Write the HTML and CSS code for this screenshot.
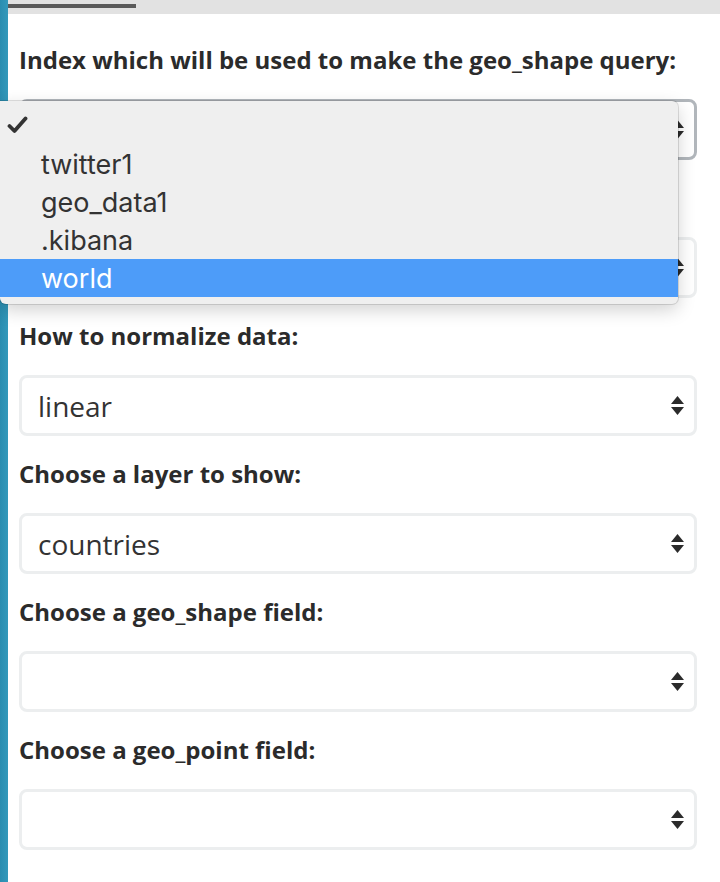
FILE: index.html
```html
<!DOCTYPE html>
<html>
<head>
<meta charset="utf-8">
<link rel="stylesheet" href="styles.css">
</head>
<body>
<div class="app">
  <div class="rail"></div>
  <div class="main">
    <div class="tabbar"><div class="tab-indicator"></div></div>
    <form class="form">
      <div class="field">
        <div class="label">Index which will be used to make the geo_shape query:</div>
        <div class="select focused">
          <span class="value"></span>
          <svg class="arrows" width="13" height="20" viewBox="0 0 13 20"><path d="M6.5 0 L13 8 H0 Z M0 11 H13 L6.5 19 Z" fill="#2b2b2b"/></svg>
        </div>
      </div>
      <div class="field">
        <div class="label covered"></div>
        <div class="select">
          <span class="value"></span>
          <svg class="arrows" width="13" height="20" viewBox="0 0 13 20"><path d="M6.5 0 L13 8 H0 Z M0 11 H13 L6.5 19 Z" fill="#2b2b2b"/></svg>
        </div>
      </div>
      <div class="field">
        <div class="label">How to normalize data:</div>
        <div class="select">
          <span class="value">linear</span>
          <svg class="arrows" width="13" height="20" viewBox="0 0 13 20"><path d="M6.5 0 L13 8 H0 Z M0 11 H13 L6.5 19 Z" fill="#2b2b2b"/></svg>
        </div>
      </div>
      <div class="field">
        <div class="label">Choose a layer to show:</div>
        <div class="select">
          <span class="value">countries</span>
          <svg class="arrows" width="13" height="20" viewBox="0 0 13 20"><path d="M6.5 0 L13 8 H0 Z M0 11 H13 L6.5 19 Z" fill="#2b2b2b"/></svg>
        </div>
      </div>
      <div class="field">
        <div class="label">Choose a geo_shape field:</div>
        <div class="select">
          <span class="value"></span>
          <svg class="arrows" width="13" height="20" viewBox="0 0 13 20"><path d="M6.5 0 L13 8 H0 Z M0 11 H13 L6.5 19 Z" fill="#2b2b2b"/></svg>
        </div>
      </div>
      <div class="field">
        <div class="label">Choose a geo_point field:</div>
        <div class="select">
          <span class="value"></span>
          <svg class="arrows" width="13" height="20" viewBox="0 0 13 20"><path d="M6.5 0 L13 8 H0 Z M0 11 H13 L6.5 19 Z" fill="#2b2b2b"/></svg>
        </div>
      </div>
    </form>
  </div>
  <ul class="menu">
    <li class="option checked"><svg class="check" width="21" height="18" viewBox="0 0 21 18"><path d="M2.5 10 L7.5 15 L18.5 2.5" fill="none" stroke="#333" stroke-width="3.8" stroke-linecap="round" stroke-linejoin="round"/></svg></li>
    <li class="option">twitter1</li>
    <li class="option">geo_data1</li>
    <li class="option">.kibana</li>
    <li class="option selected">world</li>
  </ul>
</div>
</body>
</html>
```
FILE: styles.css
```css
html, body {
  margin: 0;
  padding: 0;
  background: #ffffff;
}
.app {
  position: relative;
  display: flex;
  min-height: 882px;
  overflow: hidden;
}
.rail {
  width: 8px;
  flex: 0 0 8px;
  background: linear-gradient(to right, #2a8db0, #3399bb);
}
.main {
  flex: 1;
  display: flex;
  flex-direction: column;
}
.tabbar {
  height: 14px;
  background: #e2e2e2;
  position: relative;
}
.tab-indicator {
  width: 128px;
  height: 4px;
  margin-top: 4px;
  background: #5a5a5a;
}
.form {
  padding: 31px 23px 0 11px;
  display: flex;
  flex-direction: column;
  gap: 23px;
}
.field {
  display: flex;
  flex-direction: column;
  gap: 24px;
}
.label {
  font-family: "Open Sans", sans-serif;
  font-weight: 700;
  font-size: 24px;
  line-height: 30px;
  height: 30px;
  color: #2b2b2b;
  white-space: nowrap;
}
.select {
  height: 61px;
  box-sizing: border-box;
  border: 3px solid #eceeef;
  border-radius: 8px;
  background: #fff;
  display: flex;
  align-items: center;
  justify-content: space-between;
  padding: 0 10px 0 16px;
}
.select.focused {
  border-color: #b1b6bb;
}
.value {
  font-family: "Open Sans", sans-serif;
  font-size: 28px;
  color: #333;
}
.arrows {
  display: block;
}
.menu {
  position: absolute;
  left: 0;
  top: 101px;
  width: 678px;
  margin: 0;
  padding: 6px 0 7px 0;
  list-style: none;
  background: #efefef;
  border-radius: 0 6px 6px 6px;
  box-shadow: 0 0 0 1px rgba(0,0,0,0.12), 0 6px 18px rgba(0,0,0,0.18);
}
.option {
  height: 38px;
  display: flex;
  align-items: center;
  padding-left: 41px;
  font-family: "Inter", sans-serif;
  font-size: 27px;
  color: #333;
  position: relative;
}
.option.selected {
  background: #4d9cf9;
  color: #fff;
}
.check {
  position: absolute;
  left: 7px;
  top: 9px;
}
```
